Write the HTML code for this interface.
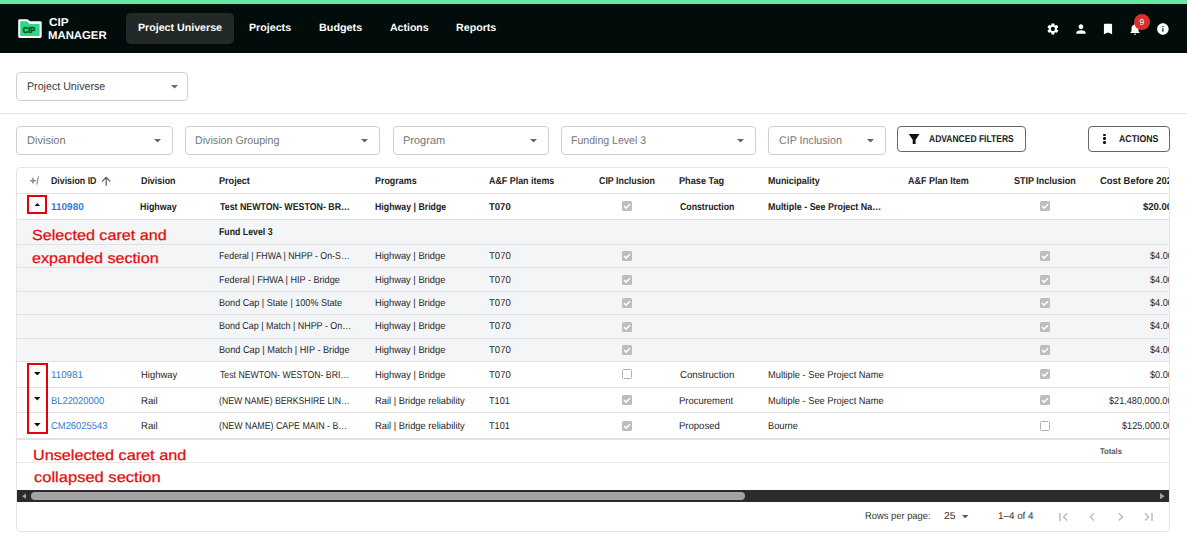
<!DOCTYPE html>
<html><head><meta charset="utf-8">
<style>
*{box-sizing:border-box;margin:0;padding:0}
html,body{width:1187px;height:542px;overflow:hidden;background:#fff;font-family:"Liberation Sans",sans-serif;color:#212121;text-rendering:geometricPrecision}
.a{position:absolute}
.t{position:absolute;white-space:nowrap}
svg{display:block}
</style></head><body>
<div class="a" style="left:0.00px;top:0.00px;width:1187.00px;height:4.00px;background:#67e9a0"></div>
<div class="a" style="left:0.00px;top:4.00px;width:1187.00px;height:49.30px;background:#020c0a"></div>
<svg class="a" style="left:18.00px;top:19.00px" width="24" height="19.5" viewBox="0 0 24 19.5"><path d="M0.2 1.6 Q0.2 0.2 1.6 0.2 H9.4 L12.2 2.2 H22.3 Q23.7 2.2 23.7 3.6 V17.6 Q23.7 19 22.3 19 H1.6 Q0.2 19 0.2 17.6 Z" fill="#fff"/><path d="M2.2 2.3 H9 L11.8 5 H21.6 V17 H2.2 Z" fill="#2cd987"/><text x="11" y="13.5" text-anchor="middle" font-family="Liberation Sans" font-weight="bold" font-size="8.6" fill="#0b4a30" stroke="#0b4a30" stroke-width="0.45" textLength="12.6" lengthAdjust="spacingAndGlyphs">CIP</text></svg>
<div class="t" style="left:48.73px;top:16.68px;font-size:11.4px;line-height:12.73px;color:#fff;font-weight:bold;transform:scaleX(1.0394);transform-origin:0 0;">CIP</div>
<div class="t" style="left:48.46px;top:29.68px;font-size:11.4px;line-height:12.73px;color:#fff;font-weight:bold;transform:scaleX(0.9958);transform-origin:0 0;">MANAGER</div>
<div class="a" style="left:126.30px;top:13.00px;width:108.00px;height:31.40px;background:#232927;border-radius:5px"></div>
<div class="t" style="left:138.01px;top:23.41px;font-size:10.6px;line-height:11.84px;color:#fff;font-weight:bold;transform:scaleX(1.0045);transform-origin:0 0;">Project Universe</div>
<div class="t" style="left:249.41px;top:23.41px;font-size:10.6px;line-height:11.84px;color:#fff;font-weight:bold;transform:scaleX(1.0066);transform-origin:0 0;">Projects</div>
<div class="t" style="left:318.90px;top:23.41px;font-size:10.6px;line-height:11.84px;color:#fff;font-weight:bold;transform:scaleX(1.0190);transform-origin:0 0;">Budgets</div>
<div class="t" style="left:390.24px;top:23.41px;font-size:10.6px;line-height:11.84px;color:#fff;font-weight:bold;transform:scaleX(0.9951);transform-origin:0 0;">Actions</div>
<div class="t" style="left:456.31px;top:23.41px;font-size:10.6px;line-height:11.84px;color:#fff;font-weight:bold;transform:scaleX(1.0063);transform-origin:0 0;">Reports</div>
<svg class="a" style="left:1046.20px;top:21.70px" width="13.8" height="13.8" viewBox="0 0 24 24"><path fill="#fff" d="M19.14 12.94c.04-.3.06-.61.06-.94 0-.32-.02-.64-.07-.94l2.03-1.58c.18-.14.23-.41.12-.61l-1.92-3.32c-.12-.22-.37-.29-.59-.22l-2.39.96c-.5-.38-1.03-.7-1.62-.94l-.36-2.54c-.04-.24-.24-.41-.48-.41h-3.84c-.24 0-.43.17-.47.41l-.36 2.54c-.59.24-1.13.57-1.62.94l-2.39-.96c-.22-.08-.47 0-.59.22L2.74 8.87c-.12.21-.08.47.12.61l2.03 1.58c-.05.3-.09.63-.09.94s.02.64.07.94l-2.03 1.58c-.18.14-.23.41-.12.61l1.92 3.32c.12.22.37.29.59.22l2.39-.96c.5.38 1.03.7 1.62.94l.36 2.54c.05.24.24.41.48.41h3.84c.24 0 .44-.17.47-.41l.36-2.54c.59-.24 1.13-.56 1.62-.94l2.39.96c.22.08.47 0 .59-.22l1.92-3.32c.12-.22.07-.47-.12-.61l-2.01-1.58zM12 15.6c-1.98 0-3.6-1.62-3.6-3.6s1.62-3.6 3.6-3.6 3.6 1.62 3.6 3.6-1.62 3.6-3.6 3.6z"/></svg>
<svg class="a" style="left:1073.70px;top:21.60px" width="14" height="14" viewBox="0 0 24 24"><path fill="#fff" d="M12 12c2.21 0 4-1.79 4-4s-1.79-4-4-4-4 1.79-4 4 1.79 4 4 4zm0 2c-2.67 0-8 1.34-8 4v2h16v-2c0-2.66-5.33-4-8-4z"/></svg>
<svg class="a" style="left:1100.50px;top:21.80px" width="14" height="14" viewBox="0 0 24 24"><path fill="#fff" d="M17 3H7c-1.1 0-1.99.9-1.99 2L5 21l7-3 7 3V5c0-1.1-.9-2-2-2z"/></svg>
<svg class="a" style="left:1128.20px;top:21.80px" width="14" height="14" viewBox="0 0 24 24"><path fill="#fff" d="M12 22c1.1 0 2-.9 2-2h-4c0 1.1.89 2 2 2zm6-6v-5c0-3.07-1.64-5.64-4.5-6.32V4c0-.83-.67-1.5-1.5-1.5s-1.5.67-1.5 1.5v.68C7.63 5.36 6 7.92 6 11v5l-2 2v1h16v-1l-2-2z"/></svg>
<div class="a" style="left:1134.00px;top:13.80px;width:16.00px;height:16.00px;background:#d6302f;border-radius:8px"></div>
<div class="t" style="left:1139.62px;top:17.51px;font-size:8.5px;line-height:9.49px;color:#fff;">9</div>
<svg class="a" style="left:1155.90px;top:21.80px" width="13.8" height="13.8" viewBox="0 0 24 24"><path fill="#fff" d="M12 2C6.48 2 2 6.48 2 12s4.48 10 10 10 10-4.48 10-10S17.52 2 12 2zm1 15h-2v-6h2v6zm0-8h-2V7h2v2z"/></svg>
<div class="a" style="left:16.40px;top:72.00px;width:171.60px;height:29.00px;border:1px solid #cfcfcf;border-radius:4px;box-sizing:border-box"></div>
<div class="t" style="left:26.95px;top:80.76px;font-size:11.2px;line-height:12.51px;color:#383838;transform:scaleX(0.9532);transform-origin:0 0;">Project Universe</div>
<svg class="a" style="left:171.00px;top:85.20px" width="7" height="3.6" viewBox="0 0 7 3.6"><path d="M0 0 H7 L3.5 3.6 Z" fill="#666"/></svg>
<div class="a" style="left:0.00px;top:112.60px;width:1187.00px;height:1.00px;background:#e4e4e4"></div>
<div class="a" style="left:16.40px;top:126.00px;width:156.60px;height:29.00px;border:1px solid #cfcfcf;border-radius:4px;box-sizing:border-box"></div>
<div class="t" style="left:26.72px;top:134.96px;font-size:11.2px;line-height:12.51px;color:#767676;transform:scaleX(0.9866);transform-origin:0 0;">Division</div>
<svg class="a" style="left:154.00px;top:139.30px" width="7" height="3.6" viewBox="0 0 7 3.6"><path d="M0 0 H7 L3.5 3.6 Z" fill="#666"/></svg>
<div class="a" style="left:185.00px;top:126.00px;width:195.00px;height:29.00px;border:1px solid #cfcfcf;border-radius:4px;box-sizing:border-box"></div>
<div class="t" style="left:195.34px;top:134.96px;font-size:11.2px;line-height:12.51px;color:#767676;transform:scaleX(0.9551);transform-origin:0 0;">Division Grouping</div>
<svg class="a" style="left:361.00px;top:139.30px" width="7" height="3.6" viewBox="0 0 7 3.6"><path d="M0 0 H7 L3.5 3.6 Z" fill="#666"/></svg>
<div class="a" style="left:392.50px;top:126.00px;width:156.50px;height:29.00px;border:1px solid #cfcfcf;border-radius:4px;box-sizing:border-box"></div>
<div class="t" style="left:402.82px;top:134.96px;font-size:11.2px;line-height:12.51px;color:#767676;transform:scaleX(0.9824);transform-origin:0 0;">Program</div>
<svg class="a" style="left:530.00px;top:139.30px" width="7" height="3.6" viewBox="0 0 7 3.6"><path d="M0 0 H7 L3.5 3.6 Z" fill="#666"/></svg>
<div class="a" style="left:561.00px;top:126.00px;width:195.00px;height:29.00px;border:1px solid #cfcfcf;border-radius:4px;box-sizing:border-box"></div>
<div class="t" style="left:571.35px;top:134.96px;font-size:11.2px;line-height:12.51px;color:#767676;transform:scaleX(0.9436);transform-origin:0 0;">Funding Level 3</div>
<svg class="a" style="left:737.00px;top:139.30px" width="7" height="3.6" viewBox="0 0 7 3.6"><path d="M0 0 H7 L3.5 3.6 Z" fill="#666"/></svg>
<div class="a" style="left:768.00px;top:126.00px;width:117.50px;height:29.00px;border:1px solid #cfcfcf;border-radius:4px;box-sizing:border-box"></div>
<div class="t" style="left:778.66px;top:134.96px;font-size:11.2px;line-height:12.51px;color:#767676;transform:scaleX(0.9564);transform-origin:0 0;">CIP Inclusion</div>
<svg class="a" style="left:866.50px;top:139.30px" width="7" height="3.6" viewBox="0 0 7 3.6"><path d="M0 0 H7 L3.5 3.6 Z" fill="#666"/></svg>
<div class="a" style="left:897.00px;top:126.00px;width:129.00px;height:26.00px;border:1px solid #666;border-radius:4px;box-sizing:border-box"></div>
<svg class="a" style="left:908.90px;top:133.60px" width="10.3" height="10.4" viewBox="0 0 10.3 10.4"><path d="M0.2 0 H10.1 Q10.5 0 10.2 0.5 L6.6 5.8 V10.4 H3.7 V5.8 L0.1 0.5 Q-0.2 0 0.2 0 Z" fill="#111"/></svg>
<div class="t" style="left:928.69px;top:133.95px;font-size:10px;line-height:11.17px;color:#1a1a1a;font-weight:bold;transform:scaleX(0.8505);transform-origin:0 0;">ADVANCED FILTERS</div>
<div class="a" style="left:1088.00px;top:126.00px;width:82.00px;height:26.00px;border:1px solid #666;border-radius:4px;box-sizing:border-box"></div>
<div class="a" style="left:1102.95px;top:133.55px;width:2.70px;height:2.70px;background:#111;border-radius:50%"></div>
<div class="a" style="left:1102.95px;top:137.35px;width:2.70px;height:2.70px;background:#111;border-radius:50%"></div>
<div class="a" style="left:1102.95px;top:141.15px;width:2.70px;height:2.70px;background:#111;border-radius:50%"></div>
<div class="t" style="left:1118.88px;top:133.95px;font-size:10px;line-height:11.17px;color:#1a1a1a;font-weight:bold;transform:scaleX(0.8744);transform-origin:0 0;">ACTIONS</div>
<div class="a" style="left:16.00px;top:167.00px;width:1154.00px;height:365.00px;border:1px solid #e4e4e4;border-radius:4px;box-sizing:border-box"></div>
<div class="a" style="left:17px;top:168px;width:1152.00px;height:363.00px;overflow:hidden;border-radius:0 0 3px 3px">
<div class="a" style="left:0.00px;top:51.00px;width:1183.00px;height:25.50px;background:#f4f5f7"></div>
<div class="a" style="left:0.00px;top:76.50px;width:1183.00px;height:23.10px;background:#f4f5f7"></div>
<div class="a" style="left:0.00px;top:99.60px;width:1183.00px;height:23.90px;background:#f4f5f7"></div>
<div class="a" style="left:0.00px;top:123.50px;width:1183.00px;height:23.00px;background:#f4f5f7"></div>
<div class="a" style="left:0.00px;top:146.50px;width:1183.00px;height:24.00px;background:#f4f5f7"></div>
<div class="a" style="left:0.00px;top:170.50px;width:1183.00px;height:23.00px;background:#f4f5f7"></div>
<div class="a" style="left:0.00px;top:24.80px;width:1183.00px;height:1.00px;background:#e2e2e2"></div>
<div class="a" style="left:0.00px;top:50.50px;width:1183.00px;height:1.00px;background:#e2e2e2"></div>
<div class="a" style="left:0.00px;top:76.00px;width:1183.00px;height:1.00px;background:#e2e2e2"></div>
<div class="a" style="left:0.00px;top:99.10px;width:1183.00px;height:1.00px;background:#e2e2e2"></div>
<div class="a" style="left:0.00px;top:123.00px;width:1183.00px;height:1.00px;background:#e2e2e2"></div>
<div class="a" style="left:0.00px;top:146.00px;width:1183.00px;height:1.00px;background:#e2e2e2"></div>
<div class="a" style="left:0.00px;top:170.00px;width:1183.00px;height:1.00px;background:#e2e2e2"></div>
<div class="a" style="left:0.00px;top:193.00px;width:1183.00px;height:1.00px;background:#e2e2e2"></div>
<div class="a" style="left:0.00px;top:218.80px;width:1183.00px;height:1.00px;background:#e2e2e2"></div>
<div class="a" style="left:0.00px;top:244.20px;width:1183.00px;height:1.00px;background:#e2e2e2"></div>
<div class="a" style="left:0.00px;top:270.00px;width:1183.00px;height:1.80px;background:#e2e2e2"></div>
<div class="a" style="left:0.00px;top:294.20px;width:1183.00px;height:1.00px;background:#e8e8e8"></div>
<svg class="a" style="left:11.00px;top:6.00px" width="14" height="13" viewBox="28 174 14 13"><path d="M30 180.7 H35.9 M32.95 177.8 V183.6" stroke="#8a8a8a" stroke-width="1.5"/><path d="M38.5 176.4 L36.8 184.6" stroke="#8a8a8a" stroke-width="1.1"/></svg>
<div class="t" style="left:33.73px;top:7.95px;font-size:10px;line-height:11.17px;color:#1c1c1c;font-weight:bold;transform:scaleX(0.8790);transform-origin:0 0;">Division ID</div>
<div class="t" style="left:123.72px;top:7.95px;font-size:10px;line-height:11.17px;color:#1c1c1c;font-weight:bold;transform:scaleX(0.8871);transform-origin:0 0;">Division</div>
<div class="t" style="left:202.21px;top:7.95px;font-size:10px;line-height:11.17px;color:#1c1c1c;font-weight:bold;transform:scaleX(0.9110);transform-origin:0 0;">Project</div>
<div class="t" style="left:358.32px;top:7.95px;font-size:10px;line-height:11.17px;color:#1c1c1c;font-weight:bold;transform:scaleX(0.8916);transform-origin:0 0;">Programs</div>
<div class="t" style="left:471.98px;top:7.95px;font-size:10px;line-height:11.17px;color:#1c1c1c;font-weight:bold;transform:scaleX(0.8897);transform-origin:0 0;">A&amp;F Plan items</div>
<div class="t" style="left:582.25px;top:7.95px;font-size:10px;line-height:11.17px;color:#1c1c1c;font-weight:bold;transform:scaleX(0.8850);transform-origin:0 0;">CIP Inclusion</div>
<div class="t" style="left:661.90px;top:7.95px;font-size:10px;line-height:11.17px;color:#1c1c1c;font-weight:bold;transform:scaleX(0.9171);transform-origin:0 0;">Phase Tag</div>
<div class="t" style="left:751.42px;top:7.95px;font-size:10px;line-height:11.17px;color:#1c1c1c;font-weight:bold;transform:scaleX(0.8932);transform-origin:0 0;">Municipality</div>
<div class="t" style="left:891.38px;top:7.95px;font-size:10px;line-height:11.17px;color:#1c1c1c;font-weight:bold;transform:scaleX(0.8965);transform-origin:0 0;">A&amp;F Plan Item</div>
<div class="t" style="left:997.05px;top:7.95px;font-size:10px;line-height:11.17px;color:#1c1c1c;font-weight:bold;transform:scaleX(0.8994);transform-origin:0 0;">STIP Inclusion</div>
<div class="t" style="left:1082.62px;top:7.95px;font-size:10px;line-height:11.17px;color:#1c1c1c;font-weight:bold;transform:scaleX(0.9442);transform-origin:0 0;">Cost Before 2028</div>
<svg class="a" style="left:84.20px;top:7.90px" width="10.35" height="10.35" viewBox="3 3 18 18"><path fill="#555" d="M4 12l1.41 1.41L11 7.83V20h2V7.83l5.58 5.59L20 12l-8-8-8 8z"/></svg>
<svg class="a" style="left:17.20px;top:34.50px" width="6.6" height="3.6" viewBox="0 0 6.6 3.6"><path d="M0 3.6 H6.6 L3.3 0 Z" fill="#111"/></svg>
<div class="t" style="left:33.98px;top:33.95px;font-size:10px;line-height:11.17px;color:#3179d0;font-weight:bold;transform:scaleX(0.9969);transform-origin:0 0;">110980</div>
<div class="t" style="left:123.32px;top:33.95px;font-size:10px;line-height:11.17px;color:#212121;font-weight:bold;transform:scaleX(0.8905);transform-origin:0 0;">Highway</div>
<div class="t" style="left:202.61px;top:33.95px;font-size:10px;line-height:11.17px;color:#212121;font-weight:bold;transform:scaleX(0.8822);transform-origin:0 0;">Test NEWTON- WESTON- BR…</div>
<div class="t" style="left:358.43px;top:33.95px;font-size:10px;line-height:11.17px;color:#212121;font-weight:bold;transform:scaleX(0.8771);transform-origin:0 0;">Highway | Bridge</div>
<div class="t" style="left:472.40px;top:33.95px;font-size:10px;line-height:11.17px;color:#212121;font-weight:bold;transform:scaleX(0.9507);transform-origin:0 0;">T070</div>
<div class="a" style="left:604.90px;top:33.20px;width:10.00px;height:10.00px;background:#bdbdbd;border-radius:1.5px"><svg width="10" height="10" viewBox="0 0 10 10" style="display:block"><path d="M2.1 5.1 L4.1 7.1 L8 3.2" fill="none" stroke="#fff" stroke-width="1.5"/></svg></div>
<div class="t" style="left:662.65px;top:33.95px;font-size:10px;line-height:11.17px;color:#212121;font-weight:bold;transform:scaleX(0.8742);transform-origin:0 0;">Construction</div>
<div class="t" style="left:751.42px;top:33.95px;font-size:10px;line-height:11.17px;color:#212121;font-weight:bold;transform:scaleX(0.8925);transform-origin:0 0;">Multiple - See Project Na…</div>
<div class="a" style="left:1022.70px;top:33.20px;width:10.00px;height:10.00px;background:#bdbdbd;border-radius:1.5px"><svg width="10" height="10" viewBox="0 0 10 10" style="display:block"><path d="M2.1 5.1 L4.1 7.1 L8 3.2" fill="none" stroke="#fff" stroke-width="1.5"/></svg></div>
<div class="t" style="left:1126.38px;top:33.95px;font-size:10px;line-height:11.17px;color:#212121;font-weight:bold;transform:scaleX(0.9510);transform-origin:0 0;">$20.00</div>
<div class="t" style="left:202.13px;top:58.95px;font-size:10px;line-height:11.17px;color:#212121;font-weight:bold;transform:scaleX(0.8761);transform-origin:0 0;">Fund Level 3</div>
<div class="t" style="left:202.00px;top:82.95px;font-size:10px;line-height:11.17px;color:#262626;transform:scaleX(0.8796);transform-origin:0 0;">Federal | FHWA | NHPP - On-S…</div>
<div class="t" style="left:358.25px;top:82.95px;font-size:10px;line-height:11.17px;color:#262626;transform:scaleX(0.9329);transform-origin:0 0;">Highway | Bridge</div>
<div class="t" style="left:472.31px;top:82.95px;font-size:10px;line-height:11.17px;color:#262626;transform:scaleX(0.9550);transform-origin:0 0;">T070</div>
<div class="a" style="left:604.90px;top:83.05px;width:10.00px;height:10.00px;background:#bdbdbd;border-radius:1.5px"><svg width="10" height="10" viewBox="0 0 10 10" style="display:block"><path d="M2.1 5.1 L4.1 7.1 L8 3.2" fill="none" stroke="#fff" stroke-width="1.5"/></svg></div>
<div class="a" style="left:1022.70px;top:83.05px;width:10.00px;height:10.00px;background:#bdbdbd;border-radius:1.5px"><svg width="10" height="10" viewBox="0 0 10 10" style="display:block"><path d="M2.1 5.1 L4.1 7.1 L8 3.2" fill="none" stroke="#fff" stroke-width="1.5"/></svg></div>
<div class="t" style="left:1132.57px;top:82.95px;font-size:10px;line-height:11.17px;color:#262626;transform:scaleX(0.9140);transform-origin:0 0;">$4.00</div>
<div class="t" style="left:201.97px;top:106.95px;font-size:10px;line-height:11.17px;color:#262626;transform:scaleX(0.9076);transform-origin:0 0;">Federal | FHWA | HIP - Bridge</div>
<div class="t" style="left:358.25px;top:106.95px;font-size:10px;line-height:11.17px;color:#262626;transform:scaleX(0.9329);transform-origin:0 0;">Highway | Bridge</div>
<div class="t" style="left:472.31px;top:106.95px;font-size:10px;line-height:11.17px;color:#262626;transform:scaleX(0.9550);transform-origin:0 0;">T070</div>
<div class="a" style="left:604.90px;top:106.55px;width:10.00px;height:10.00px;background:#bdbdbd;border-radius:1.5px"><svg width="10" height="10" viewBox="0 0 10 10" style="display:block"><path d="M2.1 5.1 L4.1 7.1 L8 3.2" fill="none" stroke="#fff" stroke-width="1.5"/></svg></div>
<div class="a" style="left:1022.70px;top:106.55px;width:10.00px;height:10.00px;background:#bdbdbd;border-radius:1.5px"><svg width="10" height="10" viewBox="0 0 10 10" style="display:block"><path d="M2.1 5.1 L4.1 7.1 L8 3.2" fill="none" stroke="#fff" stroke-width="1.5"/></svg></div>
<div class="t" style="left:1132.57px;top:106.95px;font-size:10px;line-height:11.17px;color:#262626;transform:scaleX(0.9140);transform-origin:0 0;">$4.00</div>
<div class="t" style="left:201.97px;top:129.95px;font-size:10px;line-height:11.17px;color:#262626;transform:scaleX(0.9064);transform-origin:0 0;">Bond Cap | State | 100% State</div>
<div class="t" style="left:358.25px;top:129.95px;font-size:10px;line-height:11.17px;color:#262626;transform:scaleX(0.9329);transform-origin:0 0;">Highway | Bridge</div>
<div class="t" style="left:472.31px;top:129.95px;font-size:10px;line-height:11.17px;color:#262626;transform:scaleX(0.9550);transform-origin:0 0;">T070</div>
<div class="a" style="left:604.90px;top:130.00px;width:10.00px;height:10.00px;background:#bdbdbd;border-radius:1.5px"><svg width="10" height="10" viewBox="0 0 10 10" style="display:block"><path d="M2.1 5.1 L4.1 7.1 L8 3.2" fill="none" stroke="#fff" stroke-width="1.5"/></svg></div>
<div class="a" style="left:1022.70px;top:130.00px;width:10.00px;height:10.00px;background:#bdbdbd;border-radius:1.5px"><svg width="10" height="10" viewBox="0 0 10 10" style="display:block"><path d="M2.1 5.1 L4.1 7.1 L8 3.2" fill="none" stroke="#fff" stroke-width="1.5"/></svg></div>
<div class="t" style="left:1132.57px;top:129.95px;font-size:10px;line-height:11.17px;color:#262626;transform:scaleX(0.9140);transform-origin:0 0;">$4.00</div>
<div class="t" style="left:201.98px;top:152.95px;font-size:10px;line-height:11.17px;color:#262626;transform:scaleX(0.8943);transform-origin:0 0;">Bond Cap | Match | NHPP - On…</div>
<div class="t" style="left:358.25px;top:152.95px;font-size:10px;line-height:11.17px;color:#262626;transform:scaleX(0.9329);transform-origin:0 0;">Highway | Bridge</div>
<div class="t" style="left:472.31px;top:152.95px;font-size:10px;line-height:11.17px;color:#262626;transform:scaleX(0.9550);transform-origin:0 0;">T070</div>
<div class="a" style="left:604.90px;top:153.50px;width:10.00px;height:10.00px;background:#bdbdbd;border-radius:1.5px"><svg width="10" height="10" viewBox="0 0 10 10" style="display:block"><path d="M2.1 5.1 L4.1 7.1 L8 3.2" fill="none" stroke="#fff" stroke-width="1.5"/></svg></div>
<div class="a" style="left:1022.70px;top:153.50px;width:10.00px;height:10.00px;background:#bdbdbd;border-radius:1.5px"><svg width="10" height="10" viewBox="0 0 10 10" style="display:block"><path d="M2.1 5.1 L4.1 7.1 L8 3.2" fill="none" stroke="#fff" stroke-width="1.5"/></svg></div>
<div class="t" style="left:1132.57px;top:152.95px;font-size:10px;line-height:11.17px;color:#262626;transform:scaleX(0.9140);transform-origin:0 0;">$4.00</div>
<div class="t" style="left:201.97px;top:176.95px;font-size:10px;line-height:11.17px;color:#262626;transform:scaleX(0.9172);transform-origin:0 0;">Bond Cap | Match | HIP - Bridge</div>
<div class="t" style="left:358.25px;top:176.95px;font-size:10px;line-height:11.17px;color:#262626;transform:scaleX(0.9329);transform-origin:0 0;">Highway | Bridge</div>
<div class="t" style="left:472.31px;top:176.95px;font-size:10px;line-height:11.17px;color:#262626;transform:scaleX(0.9550);transform-origin:0 0;">T070</div>
<div class="a" style="left:604.90px;top:177.00px;width:10.00px;height:10.00px;background:#bdbdbd;border-radius:1.5px"><svg width="10" height="10" viewBox="0 0 10 10" style="display:block"><path d="M2.1 5.1 L4.1 7.1 L8 3.2" fill="none" stroke="#fff" stroke-width="1.5"/></svg></div>
<div class="a" style="left:1022.70px;top:177.00px;width:10.00px;height:10.00px;background:#bdbdbd;border-radius:1.5px"><svg width="10" height="10" viewBox="0 0 10 10" style="display:block"><path d="M2.1 5.1 L4.1 7.1 L8 3.2" fill="none" stroke="#fff" stroke-width="1.5"/></svg></div>
<div class="t" style="left:1132.57px;top:176.95px;font-size:10px;line-height:11.17px;color:#262626;transform:scaleX(0.9140);transform-origin:0 0;">$4.00</div>
<svg class="a" style="left:17.20px;top:203.70px" width="6.6" height="3.6" viewBox="0 0 6.6 3.6"><path d="M0 0 H6.6 L3.3 3.6 Z" fill="#111"/></svg>
<div class="t" style="left:34.17px;top:201.95px;font-size:10px;line-height:11.17px;color:#3179d0;transform:scaleX(0.9777);transform-origin:0 0;">110981</div>
<div class="t" style="left:123.55px;top:201.95px;font-size:10px;line-height:11.17px;color:#262626;transform:scaleX(0.9427);transform-origin:0 0;">Highway</div>
<div class="t" style="left:202.63px;top:201.95px;font-size:10px;line-height:11.17px;color:#262626;transform:scaleX(0.8728);transform-origin:0 0;">Test NEWTON- WESTON- BRI…</div>
<div class="t" style="left:357.65px;top:201.95px;font-size:10px;line-height:11.17px;color:#262626;transform:scaleX(0.9343);transform-origin:0 0;">Highway | Bridge</div>
<div class="t" style="left:472.31px;top:201.95px;font-size:10px;line-height:11.17px;color:#262626;transform:scaleX(0.9550);transform-origin:0 0;">T070</div>
<div class="a" style="left:604.90px;top:201.40px;width:10.00px;height:10.00px;border:1.3px solid #b0b0b0;border-radius:1.5px;box-sizing:border-box;background:#fff"></div>
<div class="t" style="left:662.52px;top:201.95px;font-size:10px;line-height:11.17px;color:#262626;transform:scaleX(0.9673);transform-origin:0 0;">Construction</div>
<div class="t" style="left:751.26px;top:201.95px;font-size:10px;line-height:11.17px;color:#262626;transform:scaleX(0.9282);transform-origin:0 0;">Multiple - See Project Name</div>
<div class="a" style="left:1022.70px;top:201.40px;width:10.00px;height:10.00px;background:#bdbdbd;border-radius:1.5px"><svg width="10" height="10" viewBox="0 0 10 10" style="display:block"><path d="M2.1 5.1 L4.1 7.1 L8 3.2" fill="none" stroke="#fff" stroke-width="1.5"/></svg></div>
<div class="t" style="left:1132.57px;top:201.95px;font-size:10px;line-height:11.17px;color:#262626;transform:scaleX(0.9140);transform-origin:0 0;">$0.00</div>
<svg class="a" style="left:17.20px;top:229.30px" width="6.6" height="3.6" viewBox="0 0 6.6 3.6"><path d="M0 0 H6.6 L3.3 3.6 Z" fill="#111"/></svg>
<div class="t" style="left:34.15px;top:227.95px;font-size:10px;line-height:11.17px;color:#3179d0;transform:scaleX(0.9361);transform-origin:0 0;">BL22020000</div>
<div class="t" style="left:123.53px;top:227.95px;font-size:10px;line-height:11.17px;color:#262626;transform:scaleX(0.9635);transform-origin:0 0;">Rail</div>
<div class="t" style="left:202.28px;top:227.95px;font-size:10px;line-height:11.17px;color:#262626;transform:scaleX(0.8680);transform-origin:0 0;">(NEW NAME) BERKSHIRE LIN…</div>
<div class="t" style="left:357.65px;top:227.95px;font-size:10px;line-height:11.17px;color:#262626;transform:scaleX(0.9351);transform-origin:0 0;">Rail | Bridge reliability</div>
<div class="t" style="left:472.32px;top:227.95px;font-size:10px;line-height:11.17px;color:#262626;transform:scaleX(0.9140);transform-origin:0 0;">T101</div>
<div class="a" style="left:604.90px;top:227.00px;width:10.00px;height:10.00px;background:#bdbdbd;border-radius:1.5px"><svg width="10" height="10" viewBox="0 0 10 10" style="display:block"><path d="M2.1 5.1 L4.1 7.1 L8 3.2" fill="none" stroke="#fff" stroke-width="1.5"/></svg></div>
<div class="t" style="left:662.25px;top:227.95px;font-size:10px;line-height:11.17px;color:#262626;transform:scaleX(0.9433);transform-origin:0 0;">Procurement</div>
<div class="t" style="left:751.26px;top:227.95px;font-size:10px;line-height:11.17px;color:#262626;transform:scaleX(0.9282);transform-origin:0 0;">Multiple - See Project Name</div>
<div class="a" style="left:1022.70px;top:227.00px;width:10.00px;height:10.00px;background:#bdbdbd;border-radius:1.5px"><svg width="10" height="10" viewBox="0 0 10 10" style="display:block"><path d="M2.1 5.1 L4.1 7.1 L8 3.2" fill="none" stroke="#fff" stroke-width="1.5"/></svg></div>
<div class="t" style="left:1091.92px;top:227.95px;font-size:10px;line-height:11.17px;color:#262626;transform:scaleX(0.9140);transform-origin:0 0;">$21,480,000.00</div>
<svg class="a" style="left:17.20px;top:255.05px" width="6.6" height="3.6" viewBox="0 0 6.6 3.6"><path d="M0 0 H6.6 L3.3 3.6 Z" fill="#111"/></svg>
<div class="t" style="left:34.43px;top:252.95px;font-size:10px;line-height:11.17px;color:#3179d0;transform:scaleX(0.9408);transform-origin:0 0;">CM26025543</div>
<div class="t" style="left:123.53px;top:252.95px;font-size:10px;line-height:11.17px;color:#262626;transform:scaleX(0.9635);transform-origin:0 0;">Rail</div>
<div class="t" style="left:202.27px;top:252.95px;font-size:10px;line-height:11.17px;color:#262626;transform:scaleX(0.8836);transform-origin:0 0;">(NEW NAME) CAPE MAIN - B…</div>
<div class="t" style="left:357.65px;top:252.95px;font-size:10px;line-height:11.17px;color:#262626;transform:scaleX(0.9351);transform-origin:0 0;">Rail | Bridge reliability</div>
<div class="t" style="left:472.32px;top:252.95px;font-size:10px;line-height:11.17px;color:#262626;transform:scaleX(0.9140);transform-origin:0 0;">T101</div>
<div class="a" style="left:604.90px;top:252.75px;width:10.00px;height:10.00px;background:#bdbdbd;border-radius:1.5px"><svg width="10" height="10" viewBox="0 0 10 10" style="display:block"><path d="M2.1 5.1 L4.1 7.1 L8 3.2" fill="none" stroke="#fff" stroke-width="1.5"/></svg></div>
<div class="t" style="left:662.24px;top:252.95px;font-size:10px;line-height:11.17px;color:#262626;transform:scaleX(0.9523);transform-origin:0 0;">Proposed</div>
<div class="t" style="left:751.26px;top:252.95px;font-size:10px;line-height:11.17px;color:#262626;transform:scaleX(0.9290);transform-origin:0 0;">Bourne</div>
<div class="a" style="left:1022.70px;top:252.75px;width:10.00px;height:10.00px;border:1.3px solid #b0b0b0;border-radius:1.5px;box-sizing:border-box;background:#fff"></div>
<div class="t" style="left:1104.62px;top:252.95px;font-size:10px;line-height:11.17px;color:#262626;transform:scaleX(0.9140);transform-origin:0 0;">$125,000.00</div>
<div class="t" style="left:1083.12px;top:278.58px;font-size:8.2px;line-height:9.16px;color:#555;font-weight:bold;transform:scaleX(0.9333);transform-origin:0 0;">Totals</div>
<div class="a" style="left:0.00px;top:321.90px;width:1152.50px;height:11.90px;background:#2b2b2b"></div>
<div class="a" style="left:14.20px;top:324.40px;width:713.60px;height:7.30px;background:#a2a2a2;border-radius:3.7px"></div>
<svg class="a" style="left:4.70px;top:324.80px" width="4.7" height="6.3" viewBox="0 0 4.7 6.3"><path d="M4.7 0 V6.3 L0 3.15 Z" fill="#a2a2a2"/></svg>
<svg class="a" style="left:1143.20px;top:324.80px" width="4.7" height="6.3" viewBox="0 0 4.7 6.3"><path d="M0 0 V6.3 L4.7 3.15 Z" fill="#a2a2a2"/></svg>
<div class="t" style="left:848.35px;top:342.95px;font-size:10px;line-height:11.17px;color:#333;transform:scaleX(0.9364);transform-origin:0 0;">Rows per page:</div>
<div class="t" style="left:926.88px;top:342.95px;font-size:10px;line-height:11.17px;color:#333;transform:scaleX(1.0392);transform-origin:0 0;">25</div>
<svg class="a" style="left:945.30px;top:347.00px" width="6.4" height="3.3" viewBox="0 0 6.4 3.3"><path d="M0 0 H6.4 L3.2 3.3 Z" fill="#555"/></svg>
<div class="t" style="left:981.36px;top:342.95px;font-size:10px;line-height:11.17px;color:#333;transform:scaleX(0.9829);transform-origin:0 0;">1–4 of 4</div>
<svg class="a" style="left:1033.00px;top:337.00px" width="110" height="22" viewBox="1050 505 110 22"><g fill="none" stroke="#bcbcbc" stroke-width="1.5" stroke-linecap="butt" stroke-linejoin="miter"><path d="M1059.9 512.9 V520.9"/><path d="M1067.2 513.2 L1063.6 516.9 L1067.2 520.6"/><path d="M1093.9 513.2 L1090.3 516.9 L1093.9 520.6"/><path d="M1118.8 513.2 L1122.4 516.9 L1118.8 520.6"/><path d="M1145 513.2 L1148.6 516.9 L1145 520.6"/><path d="M1152 512.9 V520.9"/></g></svg>
</div>
<div class="a" style="left:27.00px;top:195.00px;width:20.20px;height:19.00px;border:2px solid #e3000b;box-sizing:border-box"></div>
<div class="a" style="left:27.10px;top:363.00px;width:20.50px;height:70.80px;border:2px solid #e3000b;box-sizing:border-box"></div>
<div class="t" style="left:31.57px;top:228.39px;font-size:14.6px;line-height:16.31px;color:#e50a0a;transform:scaleX(1.1069);transform-origin:0 0;-webkit-text-stroke:0.25px #e50a0a;">Selected caret and</div>
<div class="t" style="left:31.81px;top:251.39px;font-size:14.6px;line-height:16.31px;color:#e50a0a;transform:scaleX(1.1072);transform-origin:0 0;-webkit-text-stroke:0.25px #e50a0a;">expanded section</div>
<div class="t" style="left:33.38px;top:447.59px;font-size:14.6px;line-height:16.31px;color:#e50a0a;transform:scaleX(1.1106);transform-origin:0 0;-webkit-text-stroke:0.25px #e50a0a;">Unselected caret and</div>
<div class="t" style="left:33.90px;top:469.99px;font-size:14.6px;line-height:16.31px;color:#e50a0a;transform:scaleX(1.1317);transform-origin:0 0;-webkit-text-stroke:0.25px #e50a0a;">collapsed section</div>
</body></html>
